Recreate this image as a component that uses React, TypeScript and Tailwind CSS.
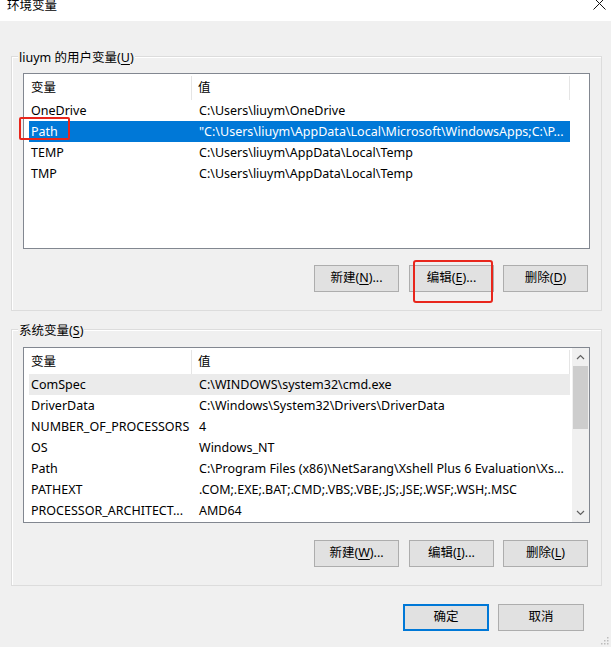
import React from 'react';

const FONT = '[font-family:"Noto_Sans","Noto_Sans_CJK_SC",sans-serif]';

type Row = { name: string; value: string; state?: 'selected' | 'hover' };

const userRows: Row[] = [
  { name: 'OneDrive', value: 'C:\\Users\\liuym\\OneDrive' },
  { name: 'Path', value: '"C:\\Users\\liuym\\AppData\\Local\\Microsoft\\WindowsApps;C:\\P...', state: 'selected' },
  { name: 'TEMP', value: 'C:\\Users\\liuym\\AppData\\Local\\Temp' },
  { name: 'TMP', value: 'C:\\Users\\liuym\\AppData\\Local\\Temp' },
];

const systemRows: Row[] = [
  { name: 'ComSpec', value: 'C:\\WINDOWS\\system32\\cmd.exe', state: 'hover' },
  { name: 'DriverData', value: 'C:\\Windows\\System32\\Drivers\\DriverData' },
  { name: 'NUMBER_OF_PROCESSORS', value: '4' },
  { name: 'OS', value: 'Windows_NT' },
  { name: 'Path', value: 'C:\\Program Files (x86)\\NetSarang\\Xshell Plus 6 Evaluation\\Xs...' },
  { name: 'PATHEXT', value: '.COM;.EXE;.BAT;.CMD;.VBS;.VBE;.JS;.JSE;.WSF;.WSH;.MSC' },
  { name: 'PROCESSOR_ARCHITECT...', value: 'AMD64' },
];

const Btn: React.FC<{ label: string; k: string; rest: string; primary?: boolean; className?: string }> = ({
  label,
  k,
  rest,
  primary,
  className = '',
}) => (
  <div
    className={`h-[27px] w-[85px] flex items-center justify-center bg-[#e1e1e1] text-[12.5px] text-black ${
      primary ? 'border-2 border-[#0078d7]' : 'border border-[#adadad]'
    } ${className}`}
  >
    <span>
      {label}
      {k && (
        <>
          (<span className="underline underline-offset-2">{k}</span>){rest}
        </>
      )}
    </span>
  </div>
);

const ListView: React.FC<{ rows: Row[]; scroll?: boolean }> = ({ rows, scroll }) => (
  <div className="ml-[11px] h-[176px] w-[567px] border border-[#828790] bg-white flex">
    <div className="flex-1 flex flex-col pl-[5px] overflow-hidden">
      <div className="h-[26px] pt-[2px] flex shrink-0 text-[12.5px]">
        <div className="w-[163px] pl-[2px] flex items-center border-r border-[#e5e5e5]">变量</div>
        <div className="w-[378px] pl-[6px] flex items-center border-r border-[#e5e5e5]">值</div>
      </div>
      {rows.map((r) => (
        <div
          key={r.name + r.value}
          className={`h-[21px] w-[541px] pt-[2px] flex shrink-0 items-center text-[12.5px] whitespace-nowrap ${
            r.state === 'selected'
              ? 'bg-[#0078d7] text-white'
              : r.state === 'hover'
              ? 'bg-[#ebebeb] text-black'
              : 'text-black'
          }`}
        >
          <div className="w-[163px] pl-[2px] overflow-hidden">{r.name}</div>
          <div className="w-[378px] pl-[7px] overflow-hidden">{r.value}</div>
        </div>
      ))}
    </div>
    {scroll && (
      <div className="w-[17px] bg-[#f0f0f0] flex flex-col">
        <div className="h-[18px] flex items-center justify-center">
          <svg width="9" height="6" viewBox="0 0 9 6">
            <path d="M1 5 L4.5 1.5 L8 5" fill="none" stroke="#606060" strokeWidth="1.2" />
          </svg>
        </div>
        <div className="mx-[1px] h-[63px] bg-[#cdcdcd]" />
        <div className="flex-1" />
        <div className="h-[18px] flex items-center justify-center">
          <svg width="9" height="6" viewBox="0 0 9 6">
            <path d="M1 1 L4.5 4.5 L8 1" fill="none" stroke="#606060" strokeWidth="1.2" />
          </svg>
        </div>
      </div>
    )}
  </div>
);

const GroupLabel: React.FC<{ text: string; k: string }> = ({ text, k }) => (
  <div className="-mt-[8px] ml-[6px] h-[17px] w-fit px-[1px] bg-[#f0f0f0] text-[12.5px] leading-[17px] text-black">
    {text}(<span className="underline underline-offset-2">{k}</span>)
  </div>
);

export default function App() {
  return (
    <div className={`relative w-[611px] h-[647px] overflow-hidden bg-[#f0f0f0] ${FONT}`}>
      {/* title bar */}
      <div className="h-[21px] bg-white flex items-start justify-between">
        <div className="ml-[7px] -mt-[3px] text-[12.5px] leading-[17px] text-black">环境变量</div>
        <svg className="mr-[5px] -mt-[3px]" width="13" height="13" viewBox="0 0 13 13">
          <path d="M0.5 0.5 L12.5 12.5 M12.5 0.5 L0.5 12.5" stroke="#111" strokeWidth="1" />
        </svg>
      </div>

      {/* user variables */}
      <div className="mt-[35px] ml-[11px] w-[591px] h-[255px] border border-[#dcdcdc] shadow-[inset_1px_1px_0_#fff]">
        <GroupLabel text="liuym 的用户变量" k="U" />
        <div className="mt-[7px]">
          <ListView rows={userRows} />
        </div>
        <div className="mt-[16px] flex">
          <Btn label="新建" k="N" rest="..." className="ml-[302px]" />
          <Btn label="编辑" k="E" rest="..." className="ml-[10px]" />
          <Btn label="删除" k="D" rest="" className="ml-[9px]" />
        </div>
      </div>

      {/* system variables */}
      <div className="mt-[18px] ml-[11px] w-[591px] h-[257px] border border-[#dcdcdc] shadow-[inset_1px_1px_0_#fff]">
        <GroupLabel text="系统变量" k="S" />
        <div className="mt-[8px]">
          <ListView rows={systemRows} scroll />
        </div>
        <div className="mt-[17px] flex">
          <Btn label="新建" k="W" rest="..." className="ml-[302px]" />
          <Btn label="编辑" k="I" rest="..." className="ml-[10px]" />
          <Btn label="删除" k="L" rest="" className="ml-[9px]" />
        </div>
      </div>

      {/* dialog buttons */}
      <div className="mt-[18px] flex">
        <Btn label="确定" k="" rest="" primary className="ml-[403px] w-[86px]" />
        <Btn label="取消" k="" rest="" className="ml-[9px] w-[86px]" />
      </div>

      {/* resize grip */}
      <svg className="absolute right-[2px] bottom-[2px]" width="8" height="8" viewBox="0 0 8 8">
        <rect x="6" y="0" width="1.5" height="1.5" fill="#bcbcbc" />
        <rect x="3" y="3" width="1.5" height="1.5" fill="#bcbcbc" />
        <rect x="6" y="3" width="1.5" height="1.5" fill="#bcbcbc" />
        <rect x="0" y="6" width="1.5" height="1.5" fill="#bcbcbc" />
        <rect x="3" y="6" width="1.5" height="1.5" fill="#bcbcbc" />
        <rect x="6" y="6" width="1.5" height="1.5" fill="#bcbcbc" />
      </svg>

      {/* red annotation boxes */}
      <div className="absolute left-[19px] top-[117px] w-[51px] h-[23px] border-2 border-[#e8261c] rounded-[2px]" />
      <div className="absolute left-[413px] top-[260px] w-[80px] h-[43px] border-2 border-[#e8261c] rounded-[3px]" />
    </div>
  );
}
